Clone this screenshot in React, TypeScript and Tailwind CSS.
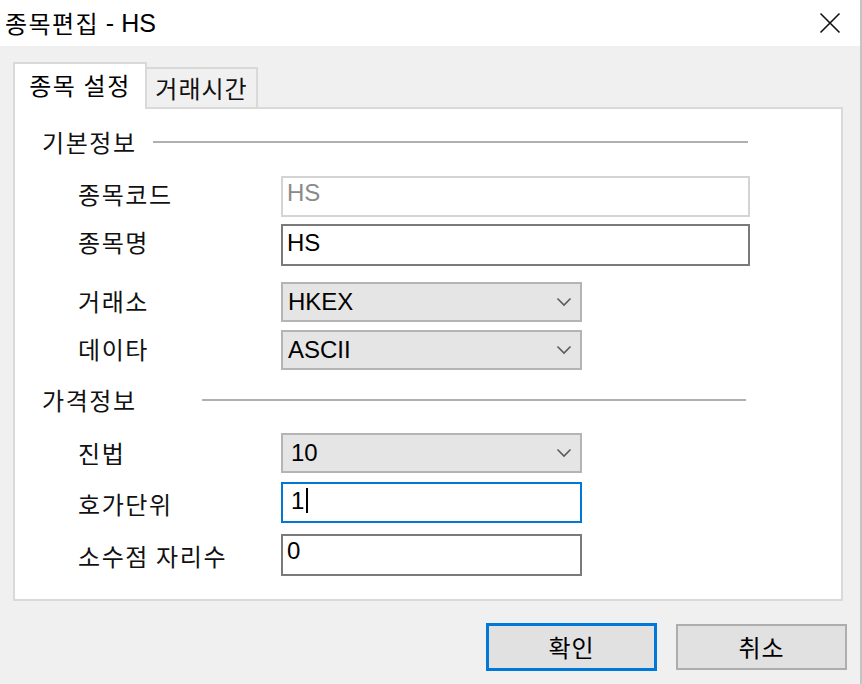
import React from "react";

const KR = { fontFamily: '"Noto Sans CJK KR", "Noto Sans", sans-serif' };
const LAT = { fontFamily: '"Liberation Sans", Arial, sans-serif' };

function Chevron() {
  return (
    <svg width="16" height="10" viewBox="0 0 16 10" className="shrink-0">
      <path d="M1.5 1.5 L8 8 L14.5 1.5" fill="none" stroke="#5a5a5a" strokeWidth="1.6" />
    </svg>
  );
}

function Label({ children, lift = "" }: { children: React.ReactNode; lift?: string }) {
  return (
    <div className={`w-[203px] shrink-0 text-[24px] tracking-[1.6px] text-[#111] leading-none ${lift}`} style={KR}>
      {children}
    </div>
  );
}

function Header({ text, lineGap, mt }: { text: string; lineGap: string; mt: string }) {
  return (
    <div className={`flex items-center h-[24px] pl-[27px] pr-[93px] ${mt}`}>
      <span className="text-[24px] tracking-[1.6px] leading-none text-[#111]" style={KR}>
        {text}
      </span>
      <div className={`flex-1 h-[2px] bg-[#b0b0b0] ${lineGap}`} />
    </div>
  );
}

function ComboBox({ value, pl }: { value: string; pl: string }) {
  return (
    <div className={`w-[301px] h-[40px] border-2 border-[#b4b4b4] bg-[#e5e5e5] flex items-center justify-between pr-[8px] ${pl}`}>
      <span className="text-[24px] leading-none text-black" style={LAT}>
        {value}
      </span>
      <Chevron />
    </div>
  );
}

export default function App() {
  return (
    <div className="w-[862px] h-[684px] bg-[#f0f0f0] flex flex-col border-r-2 border-[#c4c4c4] overflow-hidden">
      {/* title bar */}
      <div className="h-[46px] bg-white flex items-center justify-between pl-[5px] pr-[19px] shrink-0">
        <span className="text-[24px] text-black leading-none flex items-center">
          <span className="tracking-[1.4px]" style={KR}>종목편집</span>
          <span className="whitespace-pre text-[25px]" style={LAT}> - HS</span>
        </span>
        <svg width="22" height="22" viewBox="0 0 22 22">
          <path d="M1.5 1.5 L20.5 20.5 M20.5 1.5 L1.5 20.5" stroke="#111" strokeWidth="1.6" />
        </svg>
      </div>

      {/* tabs */}
      <div className="pt-[16px] pl-[13px] pr-[17px] flex flex-col">
        <div className="flex items-end">
          <div
            className="relative z-10 -mb-[2px] w-[134px] h-[47px] bg-white border-2 border-b-0 border-[#d9d9d9] flex items-center justify-center pb-[4px] text-[24px] tracking-[1.6px] text-black leading-none"
            style={KR}
          >
            종목 설정
          </div>
          <div
            className="w-[111px] h-[40px] bg-[#f0f0f0] border-2 border-l-0 border-b-0 border-[#d9d9d9] flex items-center justify-center text-[24px] tracking-[1px] text-[#111] leading-none"
            style={KR}
          >
            거래시간
          </div>
        </div>

        {/* panel */}
        <div className="h-[494px] bg-white border-2 border-[#d9d9d9] flex flex-col">
          <Header text="기본정보" lineGap="ml-[16px]" mt="mt-[21px]" />

          <div className="flex items-center pl-[63px] mt-[22px]">
            <Label lift="-mt-[6px]">종목코드</Label>
            <div className="w-[469px] h-[41px] border-2 border-[#d4d4d4] bg-white pl-[4px] pt-[1px] text-[24px] leading-[28px] text-[#8a8a8a]" style={LAT}>
              HS
            </div>
          </div>

          <div className="flex items-center pl-[63px] mt-[7px]">
            <Label lift="-mt-[6px]">종목명</Label>
            <div className="w-[469px] h-[42px] border-2 border-[#7a7a7a] bg-white pl-[4px] pt-[3px] text-[24px] leading-[28px] text-black" style={LAT}>
              HS
            </div>
          </div>

          <div className="flex items-center pl-[63px] mt-[16px]">
            <Label lift="-mt-[2px]">거래소</Label>
            <ComboBox value="HKEX" pl="pl-[5px]" />
          </div>

          <div className="flex items-center pl-[63px] mt-[8px]">
            <Label lift="-mt-[2px]">데이타</Label>
            <ComboBox value="ASCII" pl="pl-[5px]" />
          </div>

          <Header text="가격정보" lineGap="ml-[65px] mr-[2px]" mt="mt-[18px]" />

          <div className="flex items-center pl-[63px] mt-[21px]">
            <Label>진법</Label>
            <ComboBox value="10" pl="pl-[8px]" />
          </div>

          <div className="flex items-center pl-[63px] mt-[9px]">
            <Label lift="mt-[2px]">호가단위</Label>
            <div className="w-[301px] h-[41px] border-2 border-[#0078d7] bg-white pl-[8px] pt-[3px] flex items-start text-[24px] leading-[28px] text-black" style={LAT}>
              <span>1</span>
              <span className="ml-[2px] mt-[1px] w-[2px] h-[25px] bg-black" />
            </div>
          </div>

          <div className="flex items-center pl-[63px] mt-[11px]">
            <Label lift="mt-[2px]">소수점 자리수</Label>
            <div className="w-[301px] h-[42px] border-2 border-[#7a7a7a] bg-white pl-[4px] pt-[1px] text-[24px] leading-[28px] text-black" style={LAT}>
              0
            </div>
          </div>
        </div>
      </div>

      {/* buttons */}
      <div className="flex items-center justify-end gap-[19px] pr-[13px] mt-[22px]">
        <button
          className="w-[171px] h-[48px] bg-[#e1e1e1] border-[3px] border-[#0078d7] flex items-center justify-center text-[24px] tracking-[1px] text-black leading-none"
          style={KR}
        >
          확인
        </button>
        <button
          className="w-[171px] h-[46px] bg-[#e1e1e1] border-2 border-[#adadad] flex items-center justify-center text-[24px] tracking-[1px] text-black leading-none"
          style={KR}
        >
          취소
        </button>
      </div>
    </div>
  );
}
